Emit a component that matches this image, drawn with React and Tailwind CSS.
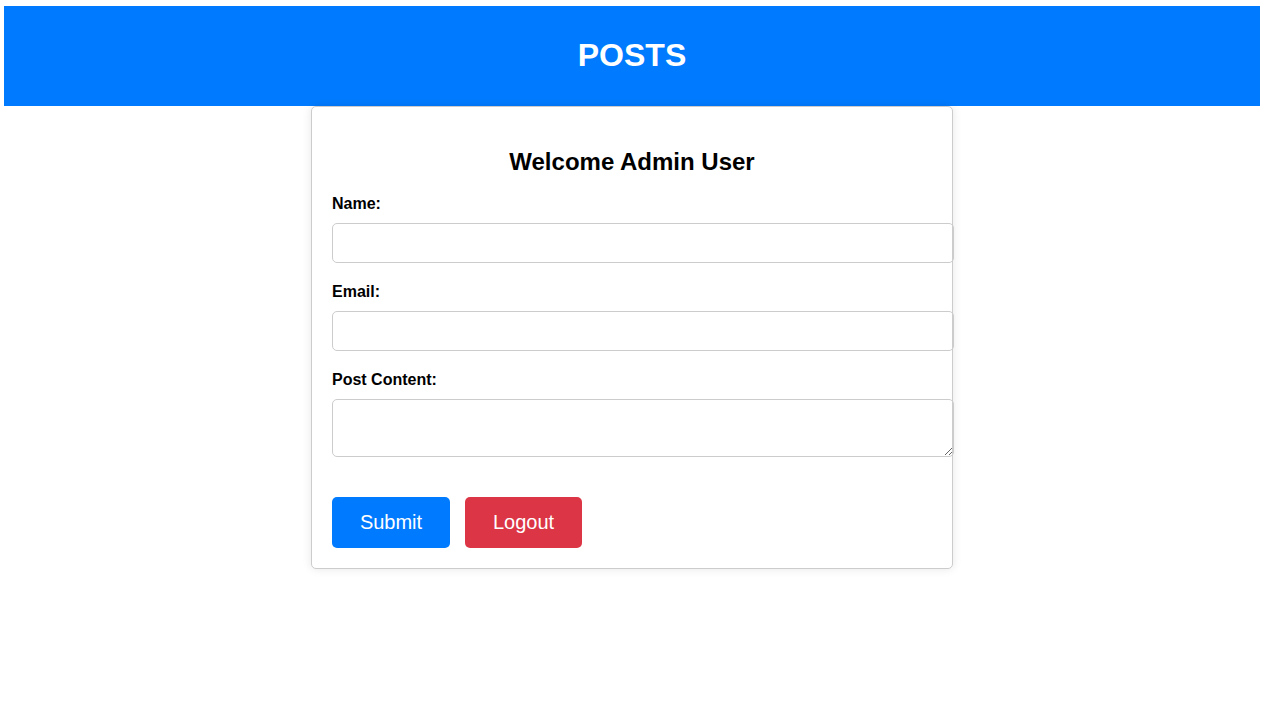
import React, { useState } from "react";

function App() {
  const [name, setName] = useState("");
  const [email, setEmail] = useState("");
  const [content, setContent] = useState("");

  const handleSubmit = (e) => {
    e.preventDefault();
  };

  return (
    <div
      className="min-h-[702px] bg-white pt-[6px] pl-[4px] text-black"
      style={{ fontFamily: '"Liberation Sans", Arial, sans-serif' }}
    >
      <div className="w-[1256px]">
        <header className="h-[100px] bg-[#007bff] flex items-center justify-center pb-[2px]">
          <h1 className="text-[32px] font-bold text-white leading-[37px]">POSTS</h1>
        </header>

        <form
          onSubmit={handleSubmit}
          className="mx-auto w-[642px] rounded-[5px] border border-[#ccc] bg-white p-[20px] shadow-[0_0_10px_rgba(0,0,0,0.1)]"
        >
          <h2 className="mt-[21px] mb-[19px] text-center text-[24px] font-bold leading-[28px]">
            Welcome Admin User
          </h2>

          <label className="block mb-[10px] text-[16px] font-bold leading-[18px]">Name:</label>
          <input
            type="text"
            value={name}
            onChange={(e) => setName(e.target.value)}
            className="block mb-[20px] w-[622px] h-[40px] rounded-[5px] border border-[#ccc] px-[10px] text-[16px] outline-none"
          />

          <label className="block mb-[10px] text-[16px] font-bold leading-[18px]">Email:</label>
          <input
            type="email"
            value={email}
            onChange={(e) => setEmail(e.target.value)}
            className="block mb-[20px] w-[622px] h-[40px] rounded-[5px] border border-[#ccc] px-[10px] text-[16px] outline-none"
          />

          <label className="block mb-[10px] text-[16px] font-bold leading-[18px]">Post Content:</label>
          <textarea
            value={content}
            onChange={(e) => setContent(e.target.value)}
            className="block w-[622px] h-[58px] rounded-[5px] border border-[#ccc] p-[10px] text-[16px] outline-none resize"
          />

          <div className="mt-[40px] flex gap-[15px]">
            <button
              type="submit"
              className="h-[51px] w-[118px] rounded-[5px] bg-[#007bff] pb-[2px] text-[20px] text-white"
            >
              Submit
            </button>
            <button
              type="button"
              className="h-[51px] w-[117px] rounded-[5px] bg-[#dc3545] pb-[2px] text-[20px] text-white"
            >
              Logout
            </button>
          </div>
        </form>
      </div>
    </div>
  );
}

export default App;
